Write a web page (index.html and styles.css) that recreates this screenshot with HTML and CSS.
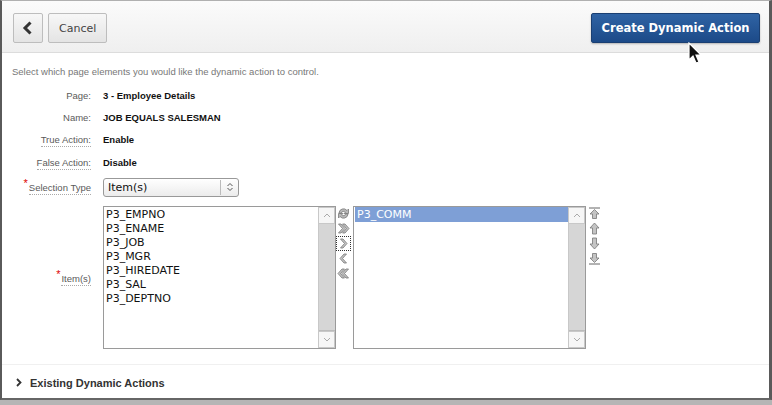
FILE: index.html
```html
<!DOCTYPE html>
<html lang="en">
  <head>
    <meta charset="UTF-8" />
    <title>Create Dynamic Action</title>
    <link rel="stylesheet" href="styles.css">
  </head>
  <body>
    <div class="dialog">
      <div class="header">
        <div class="left-buttons">
          <button class="btn btn-icon" type="button" aria-label="Back">
            <svg width="12" height="14" viewBox="0 0 12 14"><path d="M8.5 1.5 L3 7 L8.5 12.5" fill="none" stroke="#333" stroke-width="3"/></svg>
          </button>
          <button class="btn" type="button">Cancel</button>
        </div>
        <button class="btn btn-hot" type="button">Create Dynamic Action</button>
      </div>

      <div class="content">
        <p class="intro">Select which page elements you would like the dynamic action to control.</p>

        <div class="row">
          <span class="label">Page:</span>
          <span class="value">3 - Employee Details</span>
        </div>
        <div class="row">
          <span class="label">Name:</span>
          <span class="value">JOB EQUALS SALESMAN</span>
        </div>
        <div class="row">
          <span class="label"><span class="help">True Action:</span></span>
          <span class="value">Enable</span>
        </div>
        <div class="row row-shift">
          <span class="label"><span class="help">False Action:</span></span>
          <span class="value">Disable</span>
        </div>
        <div class="row row-select">
          <span class="label"><span class="req">*</span><span class="help">Selection Type</span></span>
          <div class="select">
            <span class="select-text">Item(s)</span>
            <span class="select-arrow">
              <svg width="8" height="10" viewBox="0 0 8 10"><path d="M1.5 4 L4 1.5 L6.5 4 M1.5 6 L4 8.5 L6.5 6" fill="none" stroke="#555" stroke-width="1"/></svg>
            </span>
          </div>
        </div>

        <div class="row row-shuttle">
          <span class="label"><span class="req">*</span><span class="help">Item(s)</span></span>
          <div class="shuttle">
            <div class="list">
              <ul class="options">
                <li>P3_EMPNO</li>
                <li>P3_ENAME</li>
                <li>P3_JOB</li>
                <li>P3_MGR</li>
                <li>P3_HIREDATE</li>
                <li>P3_SAL</li>
                <li>P3_DEPTNO</li>
              </ul>
              <div class="scrollbar">
                <span class="sb-btn"><svg width="8" height="5" viewBox="0 0 8 5"><path d="M1 4 L4 1 L7 4" fill="none" stroke="#aaa"/></svg></span>
                <span class="sb-track"></span>
                <span class="sb-btn"><svg width="8" height="5" viewBox="0 0 8 5"><path d="M1 1 L4 4 L7 1" fill="none" stroke="#aaa"/></svg></span>
              </div>
            </div>

            <div class="controls">
              <span class="ctl">
                <svg width="13" height="13" viewBox="0 0 13 13"><path d="M2 6 A4.5 4.5 0 0 1 10 3.5 L11.5 2 L11.5 6.5 L7 6.5 L8.5 5 A2.6 2.6 0 0 0 4.2 6.3 Z M11 7 A4.5 4.5 0 0 1 3 9.5 L1.5 11 L1.5 6.5 L6 6.5 L4.5 8 A2.6 2.6 0 0 0 8.8 6.7 Z" fill="#b8b8b8" stroke="#7a7a7a" stroke-width="0.8"/></svg>
              </span>
              <span class="ctl">
                <svg width="13" height="13" viewBox="0 0 13 13"><path d="M1.5 2 L4 2 L8 6.5 L4 11 L1.5 11 L5.5 6.5 Z M5.5 2 L8 2 L12 6.5 L8 11 L5.5 11 L9.5 6.5 Z" fill="#c4c4c4" stroke="#777" stroke-width="0.8"/></svg>
              </span>
              <span class="ctl ctl-focus">
                <svg width="13" height="13" viewBox="0 0 13 13"><path d="M3.5 2 L6 2 L10 6.5 L6 11 L3.5 11 L7.5 6.5 Z" fill="#c4c4c4" stroke="#777" stroke-width="0.8"/></svg>
              </span>
              <span class="ctl">
                <svg width="13" height="13" viewBox="0 0 13 13"><path d="M9.5 2 L7 2 L3 6.5 L7 11 L9.5 11 L5.5 6.5 Z" fill="#c4c4c4" stroke="#777" stroke-width="0.8"/></svg>
              </span>
              <span class="ctl">
                <svg width="13" height="13" viewBox="0 0 13 13"><path d="M11.5 2 L9 2 L5 6.5 L9 11 L11.5 11 L7.5 6.5 Z M7.5 2 L5 2 L1 6.5 L5 11 L7.5 11 L3.5 6.5 Z" fill="#c4c4c4" stroke="#777" stroke-width="0.8"/></svg>
              </span>
            </div>

            <div class="list">
              <ul class="options">
                <li class="selected">P3_COMM</li>
              </ul>
              <div class="scrollbar">
                <span class="sb-btn"><svg width="8" height="5" viewBox="0 0 8 5"><path d="M1 4 L4 1 L7 4" fill="none" stroke="#aaa"/></svg></span>
                <span class="sb-track"></span>
                <span class="sb-btn"><svg width="8" height="5" viewBox="0 0 8 5"><path d="M1 1 L4 4 L7 1" fill="none" stroke="#aaa"/></svg></span>
              </div>
            </div>

            <div class="controls controls-order">
              <span class="ctl">
                <svg width="13" height="13" viewBox="0 0 13 13"><path d="M1 1 L12 1" stroke="#666" stroke-width="1"/><path d="M6.5 2.5 L11 7 L8.5 7 L8.5 11.5 L4.5 11.5 L4.5 7 L2 7 Z" fill="#c4c4c4" stroke="#777" stroke-width="0.8"/></svg>
              </span>
              <span class="ctl">
                <svg width="13" height="13" viewBox="0 0 13 13"><path d="M6.5 1 L11 6 L8.5 6 L8.5 12 L4.5 12 L4.5 6 L2 6 Z" fill="#c4c4c4" stroke="#777" stroke-width="0.8"/></svg>
              </span>
              <span class="ctl">
                <svg width="13" height="13" viewBox="0 0 13 13"><path d="M6.5 12 L11 7 L8.5 7 L8.5 1 L4.5 1 L4.5 7 L2 7 Z" fill="#c4c4c4" stroke="#777" stroke-width="0.8"/></svg>
              </span>
              <span class="ctl">
                <svg width="13" height="13" viewBox="0 0 13 13"><path d="M6.5 10.5 L11 6 L8.5 6 L8.5 1.5 L4.5 1.5 L4.5 6 L2 6 Z" fill="#c4c4c4" stroke="#777" stroke-width="0.8"/><path d="M1 12 L12 12" stroke="#666" stroke-width="1"/></svg>
              </span>
            </div>
          </div>
        </div>
      </div>

      <div class="section">
        <svg width="8" height="9" viewBox="0 0 8 9"><path d="M2 1 L5.5 4.5 L2 8" fill="none" stroke="#333" stroke-width="1.8"/></svg>
        <span>Existing Dynamic Actions</span>
      </div>

      <svg class="cursor" width="16" height="24" viewBox="0 0 16 24"><path d="M1 1 L1 18 L5 14 L8 21 L11 20 L8 13 L13 13 Z" fill="#111" stroke="#fff" stroke-width="1.2"/></svg>
    </div>
  </body>
</html>
```
FILE: styles.css
```css
body {
  margin: 0;
  background-color: #b5b5b5;
  font-family: "Liberation Sans", Arial, sans-serif;
}
.dialog {
  position: relative;
  height: 400px;
  box-sizing: border-box;
  background: #fff;
  border-left: 2px solid #5a5a5a;
  border-right: 3px solid #5a5a5a;
  border-top: 1px solid #b0b0b0;
  border-bottom: 2px solid #666;
  overflow: hidden;
}
.header {
  height: 52px;
  box-sizing: border-box;
  padding: 12px 9px 0 11px;
  display: flex;
  justify-content: space-between;
  align-items: flex-start;
  background: linear-gradient(#fbfbfb, #efefef);
  border-bottom: 1px solid #dcdcdc;
}
.left-buttons {
  display: flex;
  gap: 5px;
}
.btn {
  height: 30px;
  box-sizing: border-box;
  padding: 0 10px;
  font-family: "DejaVu Sans", sans-serif;
  font-size: 11px;
  color: #444;
  background: linear-gradient(#f7f7f7, #e4e4e4);
  border: 1px solid #bdbdbd;
  border-radius: 2px;
  cursor: pointer;
}
.btn-icon {
  width: 30px;
  padding: 0;
  display: flex;
  align-items: center;
  justify-content: center;
}
.btn-hot {
  width: 169px;
  padding: 0;
  font-size: 11.5px;
  color: #fff;
  font-weight: bold;
  background: linear-gradient(#2f63a4, #1c4a88);
  border: 1px solid #1a3f72;
  box-shadow: 0 1px 2px rgba(0, 0, 0, 0.25);
}
.content {
  padding-top: 12px;
}
.intro {
  margin: 0 0 5px 10px;
  font-size: 9.5px;
  line-height: 14px;
  color: #777;
}
.row {
  display: flex;
  align-items: center;
  gap: 12px;
  height: 22px;
}
.row-shift {
  margin-top: 1px;
}
.row-select {
  height: 28px;
}
.row-shuttle {
  height: auto;
  margin-top: 5px;
}
.label {
  width: 89px;
  text-align: right;
  font-size: 9.5px;
  color: #5a5a5a;
}
.help {
  border-bottom: 1px dotted #aaa;
  padding-bottom: 1px;
}
.req {
  color: #d00;
  font-size: 11px;
  position: relative;
  top: -4px;
  margin-right: 1px;
}
.value {
  font-size: 9.5px;
  font-weight: bold;
  color: #111;
}
.select {
  width: 136px;
  height: 19px;
  box-sizing: border-box;
  display: flex;
  align-items: center;
  justify-content: space-between;
  border: 1px solid #999;
  border-radius: 3px;
  background: linear-gradient(#fff, #ececec);
  font-family: "DejaVu Sans", sans-serif;
  font-size: 11px;
  color: #111;
}
.select-text {
  padding-left: 4px;
}
.select-arrow {
  width: 17px;
  height: 15px;
  display: flex;
  align-items: center;
  justify-content: center;
  border-left: 1px solid #bbb;
}
.shuttle {
  display: flex;
  align-items: flex-start;
}
.list {
  width: 233px;
  height: 143px;
  box-sizing: border-box;
  display: flex;
  border: 1px solid #9a9a9a;
  background: #fff;
}
.options {
  flex: 1;
  list-style: none;
  margin: 0;
  padding: 1px 0 0 1px;
  font-family: "DejaVu Sans", sans-serif;
  font-size: 11px;
  line-height: 14px;
  color: #111;
}
.options li {
  padding-left: 1px;
}
.options .selected {
  margin-top: -1px;
  padding-top: 1px;
  background: #7e9fd6;
  color: #fff;
  padding-left: 2px;
}
.scrollbar {
  width: 16px;
  display: flex;
  flex-direction: column;
  border-left: 1px solid #c8c8c8;
}
.sb-btn {
  height: 15px;
  display: flex;
  align-items: center;
  justify-content: center;
  background: #f6f6f6;
  border: 1px solid #c8c8c8;
  border-left: 0;
}
.sb-track {
  flex: 1;
  background: #d6d6d6;
  border-bottom: 1px solid #bbb;
}
.controls {
  width: 17px;
  box-sizing: border-box;
  display: flex;
  flex-direction: column;
  padding: 1px 0 0 1px;
  gap: 2px;
}
.controls-order {
  padding-left: 2px;
}
.ctl {
  width: 13px;
  height: 13px;
  display: flex;
}
.ctl-focus {
  outline: 1px dotted #333;
}
.section {
  margin-top: 15px;
  height: 35px;
  display: flex;
  align-items: center;
  gap: 7px;
  padding-left: 13px;
  border-top: 1px solid #f0f0f0;
  font-size: 11px;
  font-weight: bold;
  color: #333;
}
.cursor {
  position: absolute;
  left: 686px;
  top: 41px;
}
```
